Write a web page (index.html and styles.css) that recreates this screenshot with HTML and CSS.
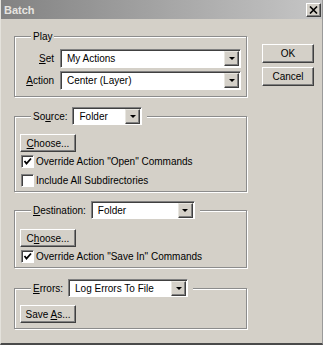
FILE: index.html
```html
<!DOCTYPE html>
<html lang="en">
<head>
  <meta charset="UTF-8">
  <meta name="viewport" content="width=device-width, initial-scale=1.0">
  <title>Batch</title>
  <link rel="stylesheet" href="styles.css">
</head>
<body>
  <div class="dialog">
    <div class="titlebar">
      <span class="title">Batch</span>
      <span class="close">
        <svg width="9" height="8" viewBox="0 0 9 8"><path d="M1 0.5 L8 7.5 M8 0.5 L1 7.5" stroke="#000" stroke-width="1.6"/></svg>
      </span>
    </div>

    <div class="content">
      <div class="groups">
        <fieldset class="group play">
          <legend>Play</legend>
          <div class="field-row">
            <span class="field-label"><u>S</u>et</span>
            <div class="combo"><span class="value">My Actions</span><span class="arrow"></span></div>
          </div>
          <div class="field-row">
            <span class="field-label"><u>A</u>ction</span>
            <div class="combo"><span class="value">Center (Layer)</span><span class="arrow"></span></div>
          </div>
        </fieldset>

        <fieldset class="group source">
          <legend>
            <span>So<u>u</u>rce:</span>
            <div class="combo source-combo"><span class="value">Folder</span><span class="arrow"></span></div>
          </legend>
          <button class="btn small-btn"><u>C</u>hoose...</button>
          <div class="check-row"><span class="checkbox checked"></span>Override Action "Open" Commands</div>
          <div class="check-row"><span class="checkbox"></span>Include All Subdirectories</div>
        </fieldset>

        <fieldset class="group destination">
          <legend>
            <span><u>D</u>estination:</span>
            <div class="combo dest-combo"><span class="value">Folder</span><span class="arrow"></span></div>
          </legend>
          <button class="btn small-btn">C<u>h</u>oose...</button>
          <div class="check-row"><span class="checkbox checked"></span>Override Action "Save In" Commands</div>
        </fieldset>

        <fieldset class="group errors">
          <legend>
            <span><u>E</u>rrors:</span>
            <div class="combo error-combo"><span class="value">Log Errors To File</span><span class="arrow"></span></div>
          </legend>
          <button class="btn small-btn">Save <u>A</u>s...</button>
        </fieldset>
      </div>

      <div class="buttons">
        <button class="btn main-btn">OK</button>
        <button class="btn main-btn">Cancel</button>
      </div>
    </div>
  </div>
</body>
</html>
```

FILE: styles.css
```css
body {
  margin: 0;
  font-family: "Liberation Sans", Arial, sans-serif;
  font-size: 10px;
  color: #000;
  background-color: #d4d0c8;
}
.dialog {
  width: 323px;
  height: 345px;
  box-sizing: border-box;
  background-color: #d4d0c8;
  border-left: 1px solid #e4e2dc;
  border-right: 1px solid #9a9a9a;
  border-bottom: 2px solid #4a4a4a;
  display: flex;
  flex-direction: column;
}
.titlebar {
  height: 19px;
  flex-shrink: 0;
  display: flex;
  align-items: center;
  justify-content: space-between;
  padding: 0 1px 0 3px;
  background: linear-gradient(to right, #828282, #a8a8a8 55%, #c6c6c6);
}
.title {
  color: #e6e4e0;
  font-weight: bold;
  font-size: 11px;
}
.close {
  width: 15px;
  height: 14px;
  box-sizing: border-box;
  display: flex;
  align-items: center;
  justify-content: center;
  background-color: #d4d0c8;
  border: 1px solid;
  border-color: #fff #404040 #404040 #fff;
  box-shadow: inset -1px -1px 0 #808080;
}
.content {
  display: flex;
  padding: 11px 0 0 13px;
}
.groups {
  width: 233px;
  display: flex;
  flex-direction: column;
}
.group {
  margin: 0;
  min-width: 0;
  border: 1px solid #8c8c8c;
  box-shadow: inset 1px 1px 0 #fff, 1px 1px 0 #fff;
}
.group legend {
  background-color: #d4d0c8;
  line-height: 13px;
  display: flex;
  align-items: center;
  gap: 5px;
}
.play {
  padding: 6px 5px 6px 8px;
}
.play legend {
  margin-left: 8px;
  padding: 0 2px;
}
.source, .destination, .errors {
  padding: 0 5px 1px 5px;
}
.source legend, .destination legend, .errors legend {
  margin-left: 11px;
  padding: 0 5px 0 2px;
}
.source {
  margin-top: 10px;
}
.source .small-btn {
  margin-top: 9px;
}
.destination {
  margin-top: 9px;
}
.destination .small-btn {
  margin-top: 10px;
}
.errors {
  margin-top: 11px;
  padding-bottom: 5px;
}
.errors .small-btn {
  margin-top: 8px;
}
.field-row {
  display: flex;
  align-items: center;
  gap: 6px;
  height: 19px;
}
.field-row + .field-row {
  margin-top: 3px;
}
.field-label {
  width: 31px;
  text-align: right;
}
.combo {
  flex: 1;
  height: 19px;
  box-sizing: border-box;
  display: flex;
  align-items: center;
  background-color: #fff;
  border: 1px solid;
  border-color: #808080 #fff #fff #808080;
  box-shadow: inset 1px 1px 0 #404040;
  padding: 1px 1px 1px 2px;
}
.combo .value {
  flex: 1;
  padding-left: 4px;
  white-space: nowrap;
  overflow: hidden;
}
.combo .arrow {
  width: 15px;
  height: 15px;
  box-sizing: border-box;
  background-color: #d4d0c8;
  border: 1px solid;
  border-color: #e8e6e0 #404040 #404040 #e8e6e0;
  box-shadow: inset -1px -1px 0 #808080;
  display: flex;
  align-items: center;
  justify-content: center;
}
.combo .arrow::after {
  content: "";
  border-left: 3px solid transparent;
  border-right: 3px solid transparent;
  border-top: 3px solid #000;
}
.source-combo, .dest-combo, .error-combo {
  flex: none;
  height: 18px;
}
.source-combo {
  width: 70px;
}
.dest-combo {
  width: 104px;
}
.error-combo {
  width: 120px;
}
.btn {
  display: block;
  padding: 0;
  font-family: inherit;
  font-size: 10px;
  color: #000;
  background-color: #d4d0c8;
  border: 1px solid;
  border-color: #fff #404040 #404040 #fff;
  box-shadow: inset -1px -1px 0 #808080;
  box-sizing: border-box;
}
.small-btn {
  width: 56px;
  height: 18px;
}
.check-row {
  display: flex;
  align-items: center;
  height: 19px;
  padding-left: 1px;
  white-space: nowrap;
}
.checkbox {
  width: 13px;
  height: 13px;
  box-sizing: border-box;
  margin-right: 2px;
  background-color: #fff;
  border: 1px solid;
  border-color: #808080 #fff #fff #808080;
  box-shadow: inset 1px 1px 0 #404040;
}
.checkbox.checked {
  background: #fff url("data:image/svg+xml,%3Csvg xmlns='http://www.w3.org/2000/svg' width='11' height='11'%3E%3Cpath d='M2.5 5 L4.5 7.5 L9 2.5' fill='none' stroke='%23000' stroke-width='1.8'/%3E%3C/svg%3E") no-repeat center;
}
.buttons {
  margin-left: 15px;
  padding-top: 14px;
  display: flex;
  flex-direction: column;
  gap: 4px;
}
.main-btn {
  width: 52px;
  height: 19px;
}
```
